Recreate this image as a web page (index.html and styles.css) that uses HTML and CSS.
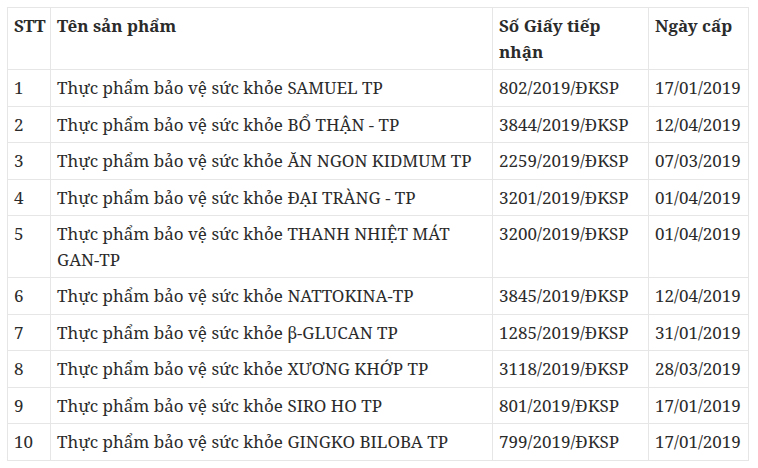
FILE: index.html
```html
<!DOCTYPE html>
<html lang="vi">
<head>
<meta charset="utf-8">
<title>Danh sách sản phẩm</title>
<link rel="stylesheet" href="styles.css">
</head>
<body>
<table class="products">
  <colgroup>
    <col class="c-stt">
    <col class="c-name">
    <col class="c-num">
    <col class="c-date">
  </colgroup>
  <thead>
    <tr><th>STT</th><th>Tên sản phẩm</th><th>Số Giấy tiếp nhận</th><th>Ngày cấp</th></tr>
  </thead>
  <tbody>
    <tr><td>1</td><td>Thực phẩm bảo vệ sức khỏe SAMUEL TP</td><td>802/2019/ĐKSP</td><td>17/01/2019</td></tr>
    <tr><td>2</td><td>Thực phẩm bảo vệ sức khỏe BỔ THẬN - TP</td><td>3844/2019/ĐKSP</td><td>12/04/2019</td></tr>
    <tr><td>3</td><td>Thực phẩm bảo vệ sức khỏe ĂN NGON KIDMUM TP</td><td>2259/2019/ĐKSP</td><td>07/03/2019</td></tr>
    <tr><td>4</td><td>Thực phẩm bảo vệ sức khỏe ĐẠI TRÀNG - TP</td><td>3201/2019/ĐKSP</td><td>01/04/2019</td></tr>
    <tr><td>5</td><td>Thực phẩm bảo vệ sức khỏe THANH NHIỆT MÁT GAN-TP</td><td>3200/2019/ĐKSP</td><td>01/04/2019</td></tr>
    <tr><td>6</td><td>Thực phẩm bảo vệ sức khỏe NATTOKINA-TP</td><td>3845/2019/ĐKSP</td><td>12/04/2019</td></tr>
    <tr><td>7</td><td>Thực phẩm bảo vệ sức khỏe β-GLUCAN TP</td><td>1285/2019/ĐKSP</td><td>31/01/2019</td></tr>
    <tr><td>8</td><td>Thực phẩm bảo vệ sức khỏe XƯƠNG KHỚP TP</td><td>3118/2019/ĐKSP</td><td>28/03/2019</td></tr>
    <tr><td>9</td><td>Thực phẩm bảo vệ sức khỏe SIRO HO TP</td><td>801/2019/ĐKSP</td><td>17/01/2019</td></tr>
    <tr><td>10</td><td>Thực phẩm bảo vệ sức khỏe GINGKO BILOBA TP</td><td>799/2019/ĐKSP</td><td>17/01/2019</td></tr>
  </tbody>
</table>
</body>
</html>
```
FILE: styles.css
```css
html, body {
  margin: 0;
  padding: 0;
  background: #ffffff;
}
body {
  padding: 7px 0 0 7px;
  font-family: "Noto Serif", "DejaVu Serif", "Liberation Serif", serif;
  font-size: 17px;
  line-height: 1.5;
  color: #2b2b2b;
}
.products {
  border-collapse: collapse;
  table-layout: fixed;
  width: 741px;
}
.c-stt { width: 43px; }
.c-name { width: 442px; }
.c-num { width: 156px; }
.c-date { width: 100px; }
.products th,
.products td {
  border: 1px solid #e6e6e6;
  padding: 5px 4px 5px 6px;
  text-align: left;
  vertical-align: top;
}
.products th {
  font-weight: 700;
}
```
